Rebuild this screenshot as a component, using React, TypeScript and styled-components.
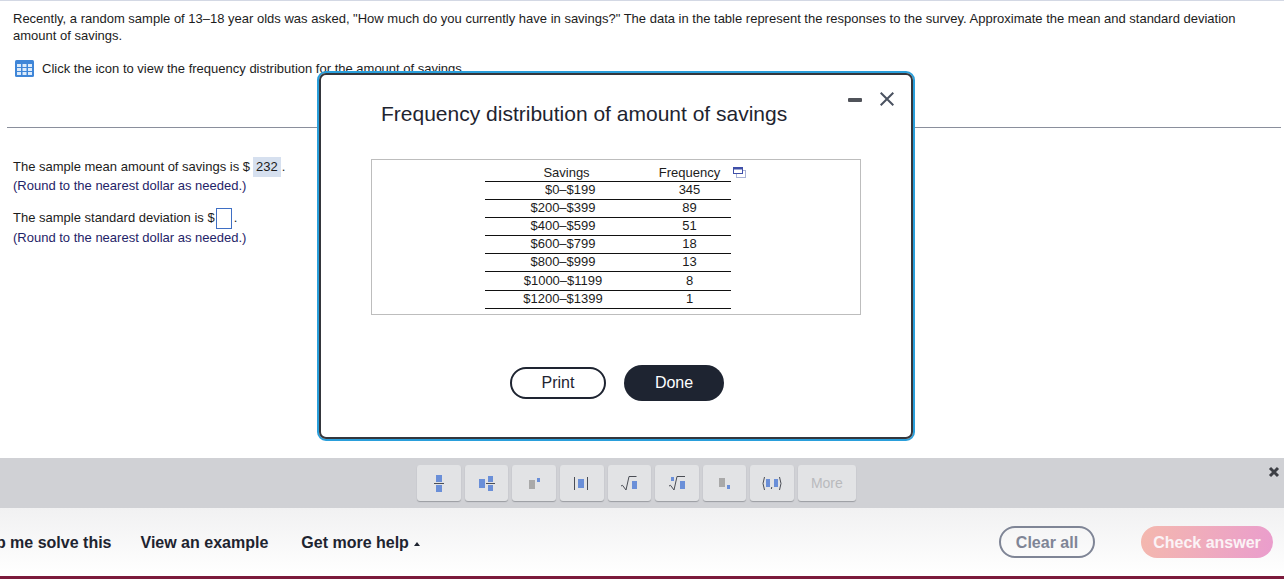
import React from 'react';

import styled, { createGlobalStyle } from 'styled-components';

const GlobalStyle = createGlobalStyle`
  html, body {
    margin: 0;
    padding: 0;
    background: #fff;
  }
  body {
    font-family: "Liberation Sans", Arial, sans-serif;
    color: #1c1c1c;
  }
`;

const Page = styled.div`
  position: relative;
  width: 1284px;
  height: 579px;
  display: flex;
  flex-direction: column;
  overflow: hidden;
`;

const Content = styled.main`
  flex: 1;
  min-height: 0;
  border-top: 1px solid #d3d8e4;
  padding: 9px 3px 0 7px;
  font-size: 13px;
  line-height: 17px;
`;

const Paragraph = styled.p`
  margin: 0 0 0 6px;
  padding-right: 40px;
`;

const IconLine = styled.div`
  display: flex;
  align-items: center;
  gap: 8px;
  margin: 16px 0 0 8px;
  height: 17px;
`;

const Divider = styled.hr`
  margin: 50px 0 0;
  border: 0;
  border-top: 1px solid #8a8f9c;
`;

const Answers = styled.section`
  margin: 29px 0 0 6px;
`;

const AnswerLine = styled.div`
  display: flex;
  align-items: flex-start;
  min-height: 20px;
  line-height: 20px;
`;

const Hint = styled.div<{ $gap?: number }>`
  color: #1f2468;
  height: 18px;
  line-height: 18px;
  margin-bottom: ${(p) => p.$gap ?? 0}px;
`;

const Filled = styled.span`
  background: #d6e0ef;
  height: 20px;
  line-height: 20px;
  padding: 0 3px;
  margin-left: 3px;
  margin-right: 1px;
`;

const EmptyInput = styled.span`
  width: 14px;
  height: 19px;
  border: 1px solid #3f6fc4;
  margin: 0 2px 0 1px;
`;

const Palette = styled.div`
  position: relative;
  height: 50px;
  flex: none;
  background: #d0d1d5;
  display: flex;
  align-items: center;
  justify-content: center;
  gap: 4px;
  padding: 0 11px 0 0;
  box-sizing: border-box;
`;

const Tool = styled.button<{ $wide?: boolean }>`
  width: ${(p) => (p.$wide ? 58 : 43.6)}px;
  height: 36px;
  padding: 0;
  border: 0;
  border-radius: 3px;
  background: #e2e3e5;
  box-shadow: 0 1px 1px #9a9ca1;
  display: flex;
  align-items: center;
  justify-content: center;
  font-family: inherit;
  font-size: 14px;
  color: #b9babd;
`;

const PaletteClose = styled.span`
  position: absolute;
  right: 4px;
  top: 8px;
  display: flex;
`;

const Footer = styled.footer`
  height: 71px;
  flex: none;
  box-sizing: border-box;
  border-bottom: 3px solid #7c1a3c;
  background: linear-gradient(#f1f1f2, #ffffff);
  display: flex;
  align-items: center;
  padding: 0 11px 0 0;
`;

const HelpLinks = styled.nav`
  display: flex;
  gap: 29px;
  margin-left: -29px;
  margin-top: 1px;
`;

const HelpLink = styled.span<{ $offset?: number }>`
  font-size: 16px;
  font-weight: 700;
  color: #1e2430;
  display: flex;
  align-items: center;
  gap: 5px;
  white-space: nowrap;
  margin-left: ${(p) => p.$offset ?? 0}px;
`;

const Caret = styled.span`
  width: 0;
  height: 0;
  border-left: 3.5px solid transparent;
  border-right: 3.5px solid transparent;
  border-bottom: 4px solid #1e2430;
  margin-top: 3px;
`;

const FooterActions = styled.div`
  margin-left: auto;
  display: flex;
  gap: 46px;
`;

const ClearButton = styled.button`
  width: 96px;
  height: 32px;
  border: 2px solid #7f8596;
  border-radius: 16px;
  background: transparent;
  font-family: inherit;
  font-size: 16px;
  font-weight: 700;
  color: #7f8596;
  padding: 1px 0 0;
`;

const CheckButton = styled.button`
  width: 132px;
  height: 32px;
  border: 0;
  border-radius: 16px;
  background: linear-gradient(100deg, #f4b8ae, #ea9dcd);
  font-family: inherit;
  font-size: 16px;
  font-weight: 700;
  color: #fbf3f6;
  padding: 1px 0 0;
`;

const Modal = styled.div`
  position: absolute;
  left: 317px;
  top: 71px;
  width: 598px;
  height: 370px;
  box-sizing: border-box;
  border: 2px solid #2a9fdb;
  border-radius: 9px;
  background: #fff;
`;

const ModalInner = styled.div`
  position: relative;
  height: 100%;
  box-sizing: border-box;
  border: 2px solid #34363c;
  border-radius: 7px;
  display: flex;
  flex-direction: column;
  padding: 24px 50px 0 60px;
`;

const ModalTitle = styled.h2`
  margin: 0;
  font-size: 21px;
  font-weight: 400;
  line-height: 30px;
  color: #1e2430;
`;

const WindowControls = styled.div`
  position: absolute;
  right: 17px;
  top: 17px;
  display: flex;
  align-items: center;
  gap: 18px;
`;

const Minimize = styled.span`
  width: 14px;
  height: 4px;
  border-radius: 1px;
  background: #50535a;
  margin-top: 2px;
`;

const TableBox = styled.div`
  position: relative;
  margin: 30px 0 0 -10px;
  width: 490px;
  height: 156px;
  box-sizing: border-box;
  border: 1px solid #bdbdbd;
  padding-top: 4px;
  padding-left: 113px;
`;

const DataTable = styled.table`
  width: 246px;
  table-layout: fixed;
  border-collapse: collapse;
  font-size: 13px;
  color: #1c1c1c;
`;

const HeadCell = styled.th<{ $width?: number }>`
  width: ${(p) => (p.$width ? `${p.$width}px` : 'auto')};
  font-weight: 400;
  height: 17px;
  padding: 0;
  line-height: 17px;
  text-align: center;
  border-bottom: 1px solid #111;
`;

const RangeCell = styled.td`
  height: 15.1px;
  padding: 0 7px 2px 0;
  line-height: 15px;
  text-align: center;
  border-bottom: 1px solid #111;
  white-space: pre;
`;

const CountCell = styled.td`
  padding: 0 0 2px;
  line-height: 15px;
  text-align: center;
  border-bottom: 1px solid #111;
`;

const CopyIcon = styled.span`
  position: absolute;
  left: 361px;
  top: 7px;
  display: flex;
`;

const ModalActions = styled.div`
  display: flex;
  align-items: center;
  justify-content: center;
  gap: 18px;
  margin: 50px 0 0 -8px;
`;

const PrintButton = styled.button`
  width: 96px;
  height: 32px;
  border: 2px solid #1e2431;
  border-radius: 16px;
  background: #fff;
  font-family: inherit;
  font-size: 16px;
  color: #1e2431;
  padding: 0;
`;

const DoneButton = styled.button`
  width: 100px;
  height: 36px;
  border: 0;
  border-radius: 18px;
  background: #1e2431;
  font-family: inherit;
  font-size: 16px;
  color: #fff;
  padding: 0;
`;

const BLUE = '#6a8fd8';
const GREY = '#a9a9a9';
const INK = '#4a4d55';

const rows: [string, number][] = [
  ['\u2007\u2007$0–$199', 345],
  ['$200–$399', 89],
  ['$400–$599', 51],
  ['$600–$799', 18],
  ['$800–$999', 13],
  ['$1000–$1199', 8],
  ['$1200–$1399', 1],
];

function GridIcon() {
  return (
    <svg width="19" height="17" viewBox="0 0 19 17">
      <rect x="0" y="0" width="19" height="17" rx="1.5" fill="#3f86d8" />
      <g fill="#dcebfb">
        <rect x="2" y="4" width="4" height="3" />
        <rect x="7.5" y="4" width="4" height="3" />
        <rect x="13" y="4" width="4" height="3" />
        <rect x="2" y="8" width="4" height="3" />
        <rect x="7.5" y="8" width="4" height="3" />
        <rect x="13" y="8" width="4" height="3" />
        <rect x="2" y="12" width="4" height="3" />
        <rect x="7.5" y="12" width="4" height="3" />
        <rect x="13" y="12" width="4" height="3" />
      </g>
    </svg>
  );
}

// all palette glyphs share one 24x20 frame, centred in the button
function ToolGlyph({ children }: { children: React.ReactNode }) {
  return (
    <svg width="24" height="20" viewBox="0 0 24 20">
      {children}
    </svg>
  );
}

function FractionIcon() {
  return (
    <ToolGlyph>
      <rect x="9" y="2" width="6" height="7" fill={BLUE} />
      <rect x="7" y="10" width="10" height="1" fill={INK} />
      <rect x="9" y="12" width="6" height="7" fill={BLUE} />
    </ToolGlyph>
  );
}

function MixedIcon() {
  return (
    <ToolGlyph>
      <rect x="4" y="6" width="6" height="9" fill={BLUE} />
      <rect x="13" y="3" width="5" height="6" fill={BLUE} />
      <rect x="11" y="10" width="9" height="1" fill={INK} />
      <rect x="13" y="12" width="5" height="6" fill={BLUE} />
    </ToolGlyph>
  );
}

function PowerIcon() {
  return (
    <ToolGlyph>
      <rect x="7" y="7" width="6" height="9" fill={GREY} />
      <rect x="15" y="5" width="3" height="4" fill={BLUE} />
    </ToolGlyph>
  );
}

function AbsIcon() {
  return (
    <ToolGlyph>
      <rect x="4" y="4" width="1" height="13" fill={INK} />
      <rect x="8" y="6" width="6" height="9" fill={BLUE} />
      <rect x="17" y="4" width="1" height="13" fill={INK} />
    </ToolGlyph>
  );
}

function RootIcon() {
  return (
    <ToolGlyph>
      <path d="M4 13 L5.5 12.3 L9 17 L12 3.5 H19.5" fill="none" stroke={INK} strokeWidth="1" />
      <rect x="15" y="8" width="5" height="8" fill={BLUE} />
    </ToolGlyph>
  );
}

function NthRootIcon() {
  return (
    <ToolGlyph>
      <rect x="6" y="4" width="3" height="4" fill={BLUE} />
      <path d="M4 13 L5.5 12.3 L9 17 L12 3.5 H20" fill="none" stroke={INK} strokeWidth="1" />
      <rect x="15" y="8" width="5" height="8" fill={BLUE} />
    </ToolGlyph>
  );
}

function SubscriptIcon() {
  return (
    <ToolGlyph>
      <rect x="7" y="5" width="6" height="9" fill={GREY} />
      <rect x="15" y="12" width="3" height="4" fill={BLUE} />
    </ToolGlyph>
  );
}

function PairIcon() {
  return (
    <ToolGlyph>
      <path d="M4.5 4 Q1.5 10.5 4.5 17" fill="none" stroke={INK} strokeWidth="1" />
      <rect x="6" y="6" width="4" height="8" fill={BLUE} />
      <path d="M11.8 14 L11.3 16" fill="none" stroke={INK} strokeWidth="1" />
      <rect x="14" y="6" width="4" height="8" fill={BLUE} />
      <path d="M19.5 4 Q22.5 10.5 19.5 17" fill="none" stroke={INK} strokeWidth="1" />
    </ToolGlyph>
  );
}

function App() {
  return (
    <Page>
      <GlobalStyle />
      <Content>
        <Paragraph>
          Recently, a random sample of 13–18 year olds was asked, "How much do
          you currently have in savings?" The data in the table represent the
          responses to the survey. Approximate the mean and standard deviation
          amount of savings.
        </Paragraph>
        <IconLine>
          <GridIcon />
          Click the icon to view the frequency distribution for the amount of
          savings.
        </IconLine>
        <Divider />
        <Answers>
          <AnswerLine>
            The sample mean amount of savings is $<Filled>232</Filled>.
          </AnswerLine>
          <Hint $gap={13}>(Round to the nearest dollar as needed.)</Hint>
          <AnswerLine>
            The sample standard deviation is $<EmptyInput />.
          </AnswerLine>
          <Hint>(Round to the nearest dollar as needed.)</Hint>
        </Answers>
      </Content>

      <Palette>
        <Tool><FractionIcon /></Tool>
        <Tool><MixedIcon /></Tool>
        <Tool><PowerIcon /></Tool>
        <Tool><AbsIcon /></Tool>
        <Tool><RootIcon /></Tool>
        <Tool><NthRootIcon /></Tool>
        <Tool><SubscriptIcon /></Tool>
        <Tool><PairIcon /></Tool>
        <Tool $wide>More</Tool>
        <PaletteClose>
          <svg width="12" height="12" viewBox="0 0 12 12">
            <path d="M2 2 L10 10 M10 2 L2 10" stroke="#3d3f45" strokeWidth="3" />
          </svg>
        </PaletteClose>
      </Palette>

      <Footer>
        <HelpLinks>
          <HelpLink>Help me solve this</HelpLink>
          <HelpLink>View an example</HelpLink>
          <HelpLink $offset={4}>
            Get more help <Caret />
          </HelpLink>
        </HelpLinks>
        <FooterActions>
          <ClearButton>Clear all</ClearButton>
          <CheckButton>Check answer</CheckButton>
        </FooterActions>
      </Footer>

      <Modal>
        <ModalInner>
          <ModalTitle>Frequency distribution of amount of savings</ModalTitle>
          <WindowControls>
            <Minimize />
            <svg width="14" height="14" viewBox="0 0 14 14">
              <path d="M0.7 0.7 L13.3 13.3 M13.3 0.7 L0.7 13.3" stroke="#4a5260" strokeWidth="2" />
            </svg>
          </WindowControls>
          <TableBox>
            <DataTable>
              <thead>
                <tr>
                  <HeadCell $width={163}>Savings</HeadCell>
                  <HeadCell>Frequency</HeadCell>
                </tr>
              </thead>
              <tbody>
                {rows.map(([range, count]) => (
                  <tr key={range}>
                    <RangeCell>{range}</RangeCell>
                    <CountCell>{count}</CountCell>
                  </tr>
                ))}
              </tbody>
            </DataTable>
            <CopyIcon>
              <svg width="13" height="11" viewBox="0 0 13 11">
                <rect x="3.5" y="3.5" width="9" height="7" fill="#fff" stroke="#a9b2d6" />
                <rect x="0.5" y="0.5" width="9" height="6" fill="#fff" stroke="#3f4fa8" />
                <rect x="0.5" y="0.5" width="9" height="2" fill="#3f4fa8" />
              </svg>
            </CopyIcon>
          </TableBox>
          <ModalActions>
            <PrintButton>Print</PrintButton>
            <DoneButton>Done</DoneButton>
          </ModalActions>
        </ModalInner>
      </Modal>
    </Page>
  );
}

export default App;
